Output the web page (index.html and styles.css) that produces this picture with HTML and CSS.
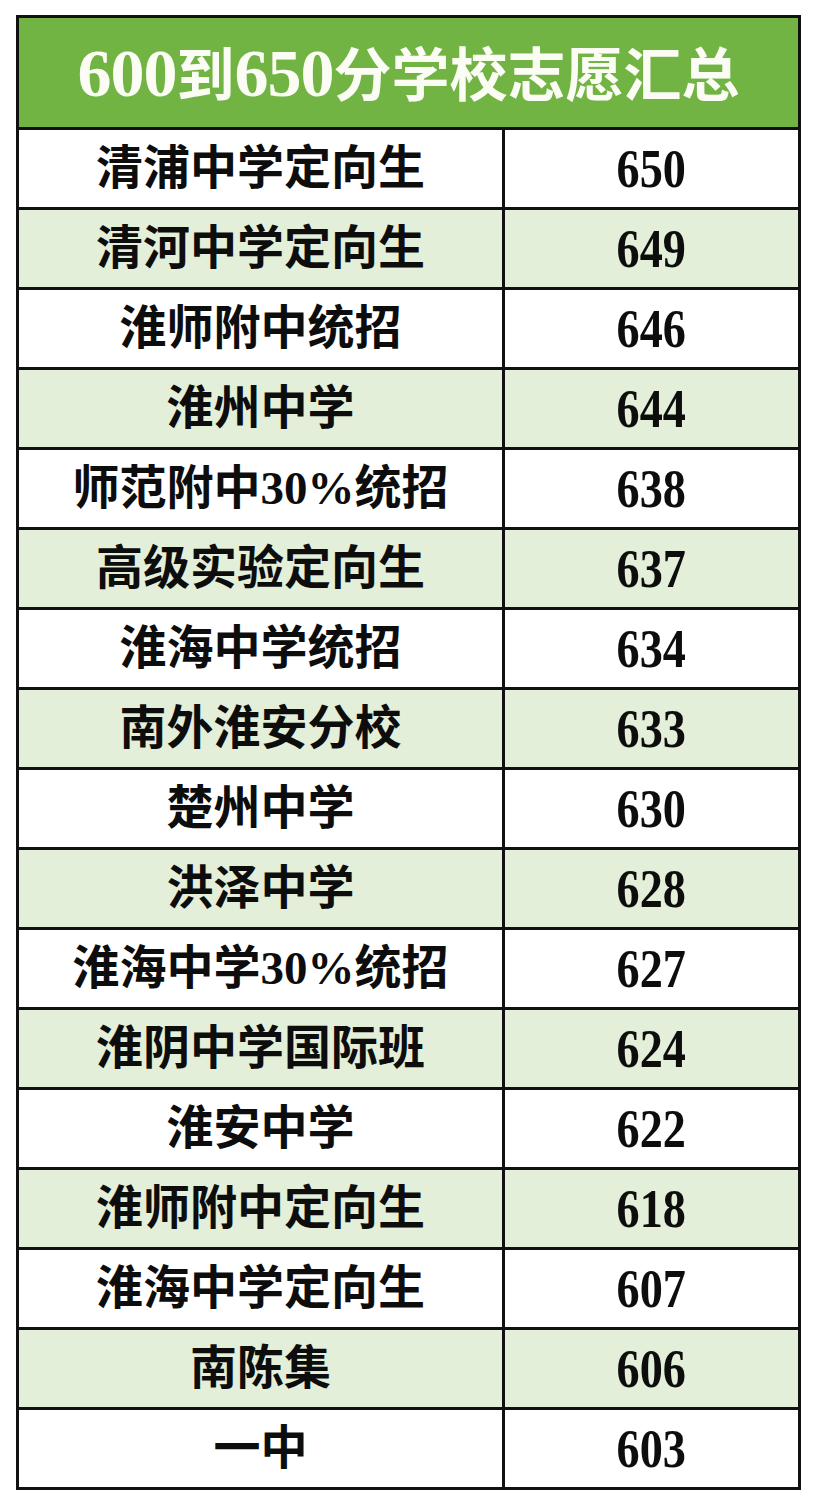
FILE: index.html
```html
<!DOCTYPE html>
<html lang="zh-CN">
<head>
<meta charset="utf-8">
<title>600到650分学校志愿汇总</title>
<link rel="stylesheet" href="styles.css">
</head>
<body>
<table class="board">
  <colgroup><col class="c-name"><col class="c-score"></colgroup>
  <thead>
    <tr class="head-row"><th colspan="2" class="title"><span class="num">600</span>到<span class="num">650</span>分学校志愿汇总</th></tr>
  </thead>
  <tbody>
    <tr><td class="name">清浦中学定向生</td><td class="score"><span>650</span></td></tr>
    <tr class="alt"><td class="name">清河中学定向生</td><td class="score"><span>649</span></td></tr>
    <tr><td class="name">淮师附中统招</td><td class="score"><span>646</span></td></tr>
    <tr class="alt"><td class="name">淮州中学</td><td class="score"><span>644</span></td></tr>
    <tr><td class="name">师范附中30%统招</td><td class="score"><span>638</span></td></tr>
    <tr class="alt"><td class="name">高级实验定向生</td><td class="score"><span>637</span></td></tr>
    <tr><td class="name">淮海中学统招</td><td class="score"><span>634</span></td></tr>
    <tr class="alt"><td class="name">南外淮安分校</td><td class="score"><span>633</span></td></tr>
    <tr><td class="name">楚州中学</td><td class="score"><span>630</span></td></tr>
    <tr class="alt"><td class="name">洪泽中学</td><td class="score"><span>628</span></td></tr>
    <tr><td class="name">淮海中学30%统招</td><td class="score"><span>627</span></td></tr>
    <tr class="alt"><td class="name">淮阴中学国际班</td><td class="score"><span>624</span></td></tr>
    <tr><td class="name">淮安中学</td><td class="score"><span>622</span></td></tr>
    <tr class="alt"><td class="name">淮师附中定向生</td><td class="score"><span>618</span></td></tr>
    <tr><td class="name">淮海中学定向生</td><td class="score"><span>607</span></td></tr>
    <tr class="alt"><td class="name">南陈集</td><td class="score"><span>606</span></td></tr>
    <tr><td class="name">一中</td><td class="score"><span>603</span></td></tr>
  </tbody>
</table>
</body>
</html>
```
FILE: styles.css
```css
html, body {
  margin: 0;
  padding: 0;
  background: #ffffff;
}
body {
  padding: 15px 0 0 16px;
  font-family: "Liberation Serif", "Noto Sans CJK SC", serif;
  color: #0d0d0d;
}
.board {
  width: 782px;
  border-collapse: collapse;
  table-layout: fixed;
}
.c-name { width: 486px; }
.c-score { width: 296px; }
.board th,
.board td {
  border: 3px solid #111111;
  padding: 0;
  text-align: center;
  vertical-align: middle;
}
.head-row { height: 112px; }
.title {
  background: #72b444;
  color: #fbfdf5;
  font-size: 58px;
  font-weight: 700;
  line-height: 1;
  letter-spacing: 0;
}
.title .num {
  font-size: 68px;
  letter-spacing: -1px;
}
tbody tr { height: 80px; }
tbody tr.alt td { background: #e3efd9; }
.name {
  font-size: 47px;
  font-weight: 700;
  line-height: 1;
}
.score span {
  display: inline-block;
  font-size: 55px;
  font-weight: 700;
  line-height: 1;
  transform: scaleX(0.84);
}
```
